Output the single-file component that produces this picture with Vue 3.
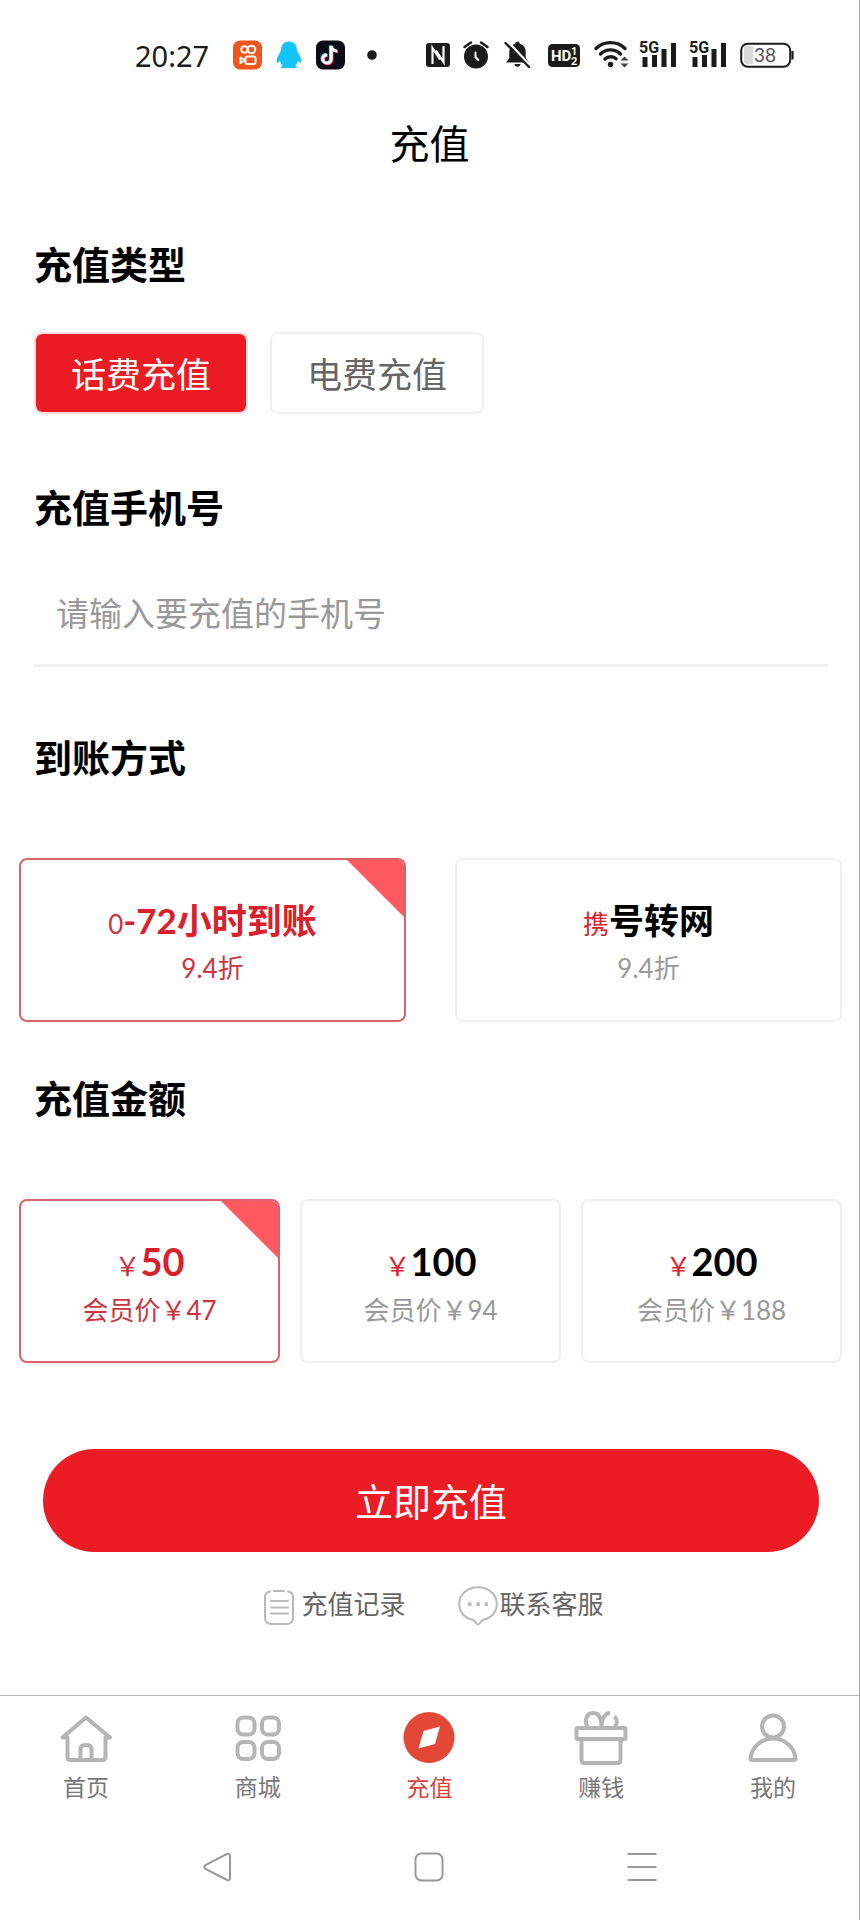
<script setup>
import { ref } from 'vue'

const types = ['话费充值', '电费充值']
const activeType = ref(0)
const phone = ref('')

const methods = [
  { lead: '0', name: '-72小时到账', note: '9.4折' },
  { lead: '携', name: '号转网', note: '9.4折' },
]
const activeMethod = ref(0)

const amounts = [
  { value: 50, member: 47 },
  { value: 100, member: 94 },
  { value: 200, member: 188 },
]
const activeAmount = ref(0)

const tabs = [
  { id: 'home', label: '首页' },
  { id: 'mall', label: '商城' },
  { id: 'recharge', label: '充值' },
  { id: 'earn', label: '赚钱' },
  { id: 'mine', label: '我的' },
]
const activeTab = ref('recharge')
</script>

<template>
  <div class="page">
    <div class="status">
      <div class="status-left">
        <time class="clock">20:27</time>
        <div class="apps">
          <svg width="29" height="30" viewBox="0 0 29 30">
            <rect width="29" height="29" y="0.5" rx="7" fill="#f2541b" />
            <g fill="none" stroke="#fff" stroke-width="2">
              <circle cx="11.5" cy="9.5" r="3.3" />
              <circle cx="18.5" cy="9.5" r="3.8" />
              <rect x="12.5" y="16.5" width="10" height="7.5" rx="2" />
              <path d="M12 20l-4.500-2.500v5.500z" stroke-linejoin="round" />
            </g>
          </svg>
          <svg width="26" height="30" viewBox="0 0 26 30">
            <path d="M13 1.500C7.500 1.500 5 5.500 5 10.500c-1.500 3-4.500 7-4.200 11 .1 2 1.400 1.600 3.200-.8.500 2.300 1.500 3.800 2.700 5-1.500.5-1.700 1.300-1.700 2.300h16c0-1-.2-1.800-1.700-2.300 1.200-1.200 2.200-2.700 2.700-5 1.800 2.400 3.100 2.800 3.200.8.300-4-2.700-8-4.200-11C21 5.500 18.500 1.500 13 1.500z" fill="#12c4f8" />
          </svg>
          <svg width="29" height="30" viewBox="0 0 29 30">
            <rect width="29" height="29" y="0.5" rx="7" fill="#0c0c16" />
            <g fill="none" stroke-width="2.800">
              <path d="M15.300 6v13a4.200 4.200 0 1 1-4.200-4.200M15.300 6c.4 3.400 3 5 6 5.200" stroke="#4fe3e6" transform="translate(-1 -.6)" />
              <path d="M15.300 6v13a4.200 4.200 0 1 1-4.200-4.200M15.300 6c.4 3.400 3 5 6 5.200" stroke="#e8345f" transform="translate(.9 .7)" />
              <path d="M15.300 6v13a4.200 4.200 0 1 1-4.200-4.200M15.300 6c.4 3.400 3 5 6 5.200" stroke="#fff" />
            </g>
          </svg>
          <svg width="26" height="30" viewBox="0 0 26 30"><circle cx="13" cy="15" r="4.800" fill="#1c1c1c" /></svg>
        </div>
      </div>
      <div class="status-right">
        <svg width="26" height="30" viewBox="0 0 26 30">
          <rect x="1" y="3" width="24" height="24" rx="3" fill="#1b1b1b" />
          <path d="M7.500 24V8l7.500 11.500M18.500 6v16L11 10.500" fill="none" stroke="#fff" stroke-width="2.200" />
        </svg>
        <svg width="26" height="30" viewBox="0 0 26 30">
          <circle cx="13" cy="16.500" r="12" fill="#1b1b1b" />
          <path d="M1.500 7L8 2.500M24.500 7L18 2.500" stroke="#1b1b1b" stroke-width="2.500" stroke-linecap="round" />
          <path d="M12.500 12.500v4.500l2.800 3" fill="none" stroke="#fff" stroke-width="2" stroke-linecap="round" />
        </svg>
        <svg width="32" height="30" viewBox="0 0 32 30">
          <path d="M16.500 1.500c1.400 0 2.200 1 2.200 2.200 4 1 6 4.300 6 8.300v6l3.300 4.500H5l3.300-4.500v-6c0-4 2-7.300 6-8.300 0-1.200.8-2.200 2.200-2.200zM13.500 24h6c0 3.500-6 3.500-6 0z" fill="#1b1b1b" />
          <path d="M6.500 1l23 25" stroke="#fefefe" stroke-width="2.500" />
          <path d="M4.500 3l23.500 24" stroke="#1b1b1b" stroke-width="2.400" stroke-linecap="round" />
        </svg>
        <svg width="37" height="30" viewBox="0 0 37 30">
          <rect x="3" y="4" width="32" height="23" rx="4.500" fill="#1b1b1b" />
          <text x="6" y="21" class="hd">HD</text>
          <text x="26" y="15" class="sim">1</text>
          <text x="26" y="25" class="sim">2</text>
        </svg>
        <svg width="34" height="30" viewBox="0 0 34 30">
          <g fill="none" stroke="#1b1b1b" stroke-width="3.400" stroke-linecap="round">
            <path d="M2 8.500C10 .7 23 .7 31 8.500" />
            <path d="M6.500 14c5.500-5.500 14.500-5.500 20 0" />
            <path d="M11 19c3-3 8.500-3 11 -.3" />
          </g>
          <circle cx="16.500" cy="24.500" r="2.700" fill="#1b1b1b" />
          <path d="M26.500 20.500l4-4 4 4zM26.500 23.500l4 4 4-4z" fill="#444" />
        </svg>
        <svg v-for="n in 2" :key="n" width="38" height="30" viewBox="0 0 38 30">
          <text x="-1" y="13" class="net">5G</text>
          <path d="M5 17v10M14.500 15v12M24 9v18M33.500 3v24" stroke="#1b1b1b" stroke-width="5" />
        </svg>
        <svg width="55" height="30" viewBox="0 0 55 30">
          <path d="M4 6h9v18H7q-3 0-3-3z" fill="#d9d9d9" />
          <rect x="1.200" y="3.700" width="49" height="23" rx="6.500" fill="none" stroke="#1b1b1b" stroke-width="2" />
          <path d="M52.500 11v8.500" stroke="#1b1b1b" stroke-width="2.200" />
          <text x="25" y="22" text-anchor="middle" class="battery">38</text>
        </svg>
      </div>
    </div>

    <header class="header"><h1>充值</h1></header>

    <main class="main">
      <h2 class="title">充值类型</h2>
      <div class="types">
        <button v-for="(t, i) in types" :key="t" type="button" class="type" :class="{ on: activeType === i }" :aria-pressed="activeType === i" @click="activeType = i">{{ t }}</button>
      </div>

      <label class="title phone-title" for="phone">充值手机号</label>
      <input id="phone" v-model="phone" class="phone" type="tel" placeholder="请输入要充值的手机号" />

      <h2 class="title method-title">到账方式</h2>
      <div class="cards methods">
        <button v-for="(m, i) in methods" :key="m.name" type="button" class="card" :class="{ on: activeMethod === i }" :aria-pressed="activeMethod === i" @click="activeMethod = i">
          <span class="card-name"><span class="lead">{{ m.lead }}</span>{{ m.name }}</span>
          <span class="card-note">{{ m.note }}</span>
        </button>
      </div>

      <h2 class="title amount-title">充值金额</h2>
      <div class="cards amounts">
        <button v-for="(a, i) in amounts" :key="a.value" type="button" class="card" :class="{ on: activeAmount === i }" :aria-pressed="activeAmount === i" @click="activeAmount = i">
          <span class="card-name price"><span class="lead">￥</span>{{ a.value }}</span>
          <span class="card-note">会员价￥{{ a.member }}</span>
        </button>
      </div>

      <button type="button" class="submit">立即充值</button>

      <div class="links">
        <a href="#records" class="link record">
          <svg width="30" height="40" viewBox="0 0 30 40" fill="none" stroke="#b9b9b9" stroke-width="2" stroke-linecap="round">
            <path d="M6 5.500C3 6 1 8 1 11v20.500q0 6.500 6.500 6.500h15q6.500 0 6.500-6.500V11c0-3-2-5-5-5.500M10 5h10" />
            <path d="M7 15h17M7 21.500h17M7 27.500h17" />
          </svg>
          <span>充值记录</span>
        </a>
        <a href="#service" class="link">
          <svg width="40" height="40" viewBox="0 0 40 40">
            <path d="M20 1.200C9.500 1.200 1.200 8.500 1.200 18c0 8 5.500 14 13.500 15.800 2.500.7 3.500 4.700 5.300 4.700s2.800-4 5.300-4.700C33.300 32 38.800 26 38.800 18 38.800 8.500 30.500 1.200 20 1.200z" fill="none" stroke="#b9b9b9" stroke-width="2" />
            <path d="M10 16.500h3.500v3.500H10zM18.300 16.500h3.500v3.500h-3.500zM26.500 16.500H30v3.500h-3.500z" fill="#b9b9b9" />
          </svg>
          <span>联系客服</span>
        </a>
      </div>
    </main>

    <nav class="tabs">
      <a v-for="t in tabs" :key="t.id" :href="'#' + t.id" class="tab" :class="{ on: activeTab === t.id }" @click="activeTab = t.id">
        <svg width="56" height="56" viewBox="0 0 56 56" fill="none" stroke="#b5b5b5" stroke-width="4" stroke-linejoin="round" stroke-linecap="round">
          <g v-if="t.id === 'home'">
            <path d="M28 7.500L4.500 27.500h5V47q0 3 3 3h32q3 0 3-3V27.500h4.500z" />
            <path d="M22.500 49v-9.500q0-4.500 4.500-4.500h2q4.500 0 4.500 4.500V49" />
          </g>
          <g v-else-if="t.id === 'mall'">
            <rect x="7.500" y="7.500" width="17" height="17" rx="6" />
            <rect x="32" y="7.500" width="17" height="17" rx="6" />
            <rect x="7.500" y="32" width="17" height="17" rx="6" />
            <rect x="32" y="32" width="17" height="17" rx="6" />
          </g>
          <g v-else-if="t.id === 'recharge'" stroke="none">
            <circle cx="28" cy="27.500" r="25.500" fill="#e34736" />
            <path d="M39 16.500L34 34l-16.500 4.500L22.500 21z" fill="#fff" />
          </g>
          <g v-else-if="t.id === 'earn'">
            <rect x="3.500" y="18" width="49" height="11" rx="1" />
            <path d="M8.500 30v20q0 3 3 3h33q3 0 3-3V30" />
            <path d="M15 17C10.500 11.500 13.500 3 20 3c6 0 8.500 5 8.500 14C28.500 8.500 32 3 37 3M41.500 6.500c3.500 3.500 2.800 7.500 0 10.500" stroke-linecap="butt" />
          </g>
          <g v-else>
            <circle cx="28" cy="16.500" r="11" />
            <path d="M5.500 48.500C6.500 37 16.500 28.500 28 28.500S49.500 37 50.500 48.500q0 1.500-2 1.500H7.500q-2 0-2-1.500z" />
          </g>
        </svg>
        <span>{{ t.label }}</span>
      </a>
    </nav>

    <div class="system">
      <button type="button" aria-label="返回">
        <svg width="32" height="32" viewBox="0 0 32 32"><path d="M26 2.800L4.500 14Q2 16 4.500 18L26 29q3 1 3-2V5q0-3-3-2.200z" /></svg>
      </button>
      <button type="button" aria-label="主屏幕">
        <svg width="32" height="32" viewBox="0 0 32 32"><rect x="2.500" y="2.500" width="27" height="27" rx="6" /></svg>
      </button>
      <button type="button" aria-label="菜单">
        <svg width="32" height="32" viewBox="0 0 32 32"><path d="M1.500 3h29M1.500 16h29M1.500 29h29" /></svg>
      </button>
    </div>
  </div>
</template>

<style>
body {
  margin: 0;
}
</style>

<style scoped>
.page {
  box-sizing: border-box;
  min-height: 100vh;
  display: flex;
  flex-direction: column;
  background: #fefefe;
  border-right: 1px solid #a8a8a8;
  color: #000;
  font-family: Lato, "Noto Sans CJK SC", sans-serif;
}
button {
  font-family: inherit;
  cursor: pointer;
}
svg {
  display: block;
  flex: none;
  overflow: visible;
}
.status {
  display: flex;
  align-items: center;
  justify-content: space-between;
  height: 110px;
  padding: 0 64px 0 135px;
}
.status-left,
.apps,
.status-right {
  display: flex;
  align-items: center;
}
.status-left {
  gap: 24px;
}
.apps {
  gap: 14px;
}
.status-right {
  gap: 12px;
}
.clock {
  font: 29px "Noto Sans", sans-serif;
  color: #1c1c1c;
}
.hd {
  font: bold 15px "Liberation Sans Narrow", Roboto, sans-serif;
  fill: #fff;
}
.sim {
  font: bold 11px Roboto, sans-serif;
  fill: #fff;
}
.net {
  font: bold 16px "Liberation Sans Narrow", Roboto, sans-serif;
  fill: #1b1b1b;
}
.battery {
  font: 19px Lato, sans-serif;
  fill: #555;
}
.header {
  text-align: center;
}
.header h1 {
  margin: 0;
  font-size: 40px;
  font-weight: 400;
  line-height: 68px;
}
.main {
  padding: 58px 17px 0 19px;
}
.title {
  display: block;
  margin: 0;
  padding-left: 15px;
  font-size: 38px;
  font-weight: 700;
  line-height: 56px;
}
.types {
  display: flex;
  gap: 22px;
  margin: 40px 0 0 15px;
}
.type {
  height: 82px;
  padding: 0 35px 2px;
  border: 2px solid #f0f0f0;
  border-radius: 8px;
  background: #fff;
  color: #666;
  font-size: 35px;
}
.type.on {
  background: #ec1c24;
  background-clip: padding-box;
  border-color: #f6dcdd;
  color: #fff;
}
.phone-title {
  margin-top: 65px;
}
.phone {
  display: block;
  box-sizing: border-box;
  width: calc(100% - 29px);
  height: 103px;
  margin: 29px 14px 0 15px;
  padding: 0 22px 2px;
  border: 0;
  border-bottom: 3px solid #f0f0f0;
  background: none;
  font-family: inherit;
  font-size: 33px;
  color: #333;
}
.phone::placeholder {
  color: #999;
  opacity: 1;
}
.method-title {
  margin-top: 62px;
}
.amount-title {
  margin-top: 48px;
}
.cards {
  display: grid;
  margin-top: 73px;
}
.methods {
  grid-template-columns: repeat(2, 1fr);
  gap: 49px;
}
.amounts {
  grid-template-columns: repeat(3, 1fr);
  gap: 20px;
}
.card {
  position: relative;
  display: flex;
  flex-direction: column;
  align-items: center;
  height: 164px;
  padding: 36px 0 0;
  border: 2px solid #f0f0f0;
  border-radius: 8px;
  background: #fff;
  overflow: hidden;
}
.card-name {
  font-size: 35px;
  font-weight: 700;
  line-height: 48px;
  color: #000;
}
.price {
  font-size: 38px;
}
.lead {
  font-size: 26px;
  font-weight: 400;
  color: #d9262e;
}
.card-note {
  font-size: 26px;
  line-height: 40px;
  color: #999;
}
.card.on {
  border-color: #d9626b;
}
.card.on .card-name {
  color: #d9202b;
}
.card.on .lead,
.card.on .card-note {
  color: #cb3540;
}
.card.on::after {
  content: "";
  position: absolute;
  top: 0;
  right: 0;
  width: 57px;
  height: 57px;
  background: #ff5a5f;
  clip-path: polygon(0 0, 100% 0, 100% 100%);
}
.submit {
  display: block;
  width: calc(100% - 47px);
  height: 103px;
  margin: 86px 23px 0 24px;
  padding: 0 0 3px;
  border: 0;
  border-radius: 52px;
  background: #ec1c24;
  color: #fff;
  font-size: 38px;
}
.links {
  display: flex;
  justify-content: center;
  gap: 52px;
  margin: 34px 0 40px;
  padding-left: 7px;
}
.link {
  display: flex;
  gap: 2px;
  color: #666;
  font-size: 26px;
  line-height: 36px;
  text-decoration: none;
}
.record {
  gap: 7px;
}
.tabs {
  display: flex;
  margin-top: auto;
  padding-top: 14px;
  border-top: 1px solid #b5b5b5;
}
.tab {
  flex: 1;
  display: flex;
  flex-direction: column;
  align-items: center;
  gap: 5px;
  color: #777;
  font-size: 23px;
  line-height: 32px;
  text-decoration: none;
}
.tab.on {
  color: #d9443c;
}
.system {
  display: grid;
  grid-template-columns: repeat(3, 1fr);
  align-items: center;
  justify-items: center;
  height: 106px;
  margin-top: 11px;
  padding: 0 111px;
}
.system button {
  padding: 0;
  border: 0;
  background: none;
}
.system svg {
  fill: none;
  stroke: #999;
  stroke-width: 2;
}
</style>
